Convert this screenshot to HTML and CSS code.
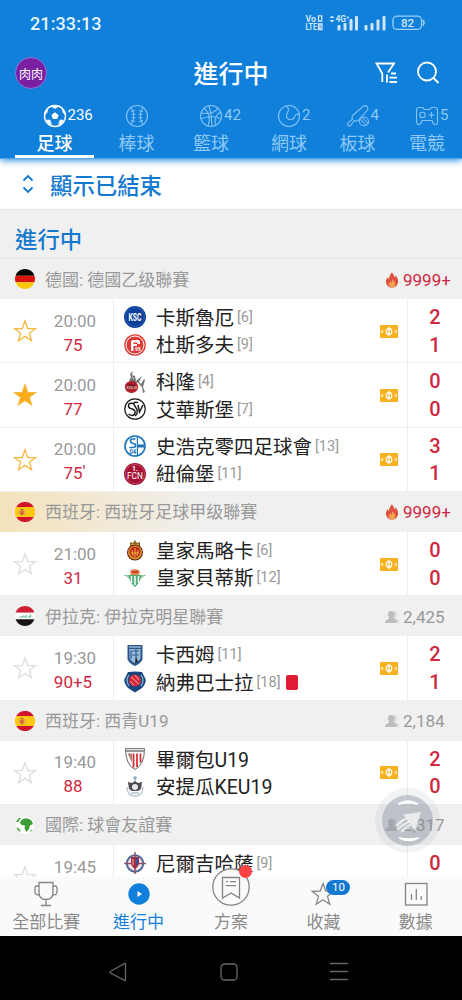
FILE: index.html
```html
<!DOCTYPE html>
<html lang="zh-Hant">
<head>
    <meta charset="UTF-8">
    <meta name="viewport" content="width=device-width, initial-scale=1.0">
    <title>進行中</title>
    <link rel="stylesheet" href="styles.css">
</head>
<body>
    <!-- Shared icons -->
    <svg class="sprite" width="0" height="0">
        <symbol id="star" viewBox="0 0 24 24"><path d="M12 1.800l2.700 7.700 7.700.2-6 4.600 2.100 7.400-6.500-4.300-6.500 4.300 2.100-7.400-6-4.600 7.700-.2z"/></symbol>
        <symbol id="pitch" viewBox="0 0 18 13">
            <rect width="18" height="13" rx="1" fill="#f9b01e"/>
            <ellipse cx="9" cy="6.500" rx="2.800" ry="2.800" fill="none" stroke="#fff" stroke-width="1.300"/>
            <path d="M9 1.800v9.400" stroke="#fff" stroke-width="1.300"/>
            <path d="M1.500 4.500l2 2-2 2zM16.500 4.500l-2 2 2 2z" fill="#fff"/>
        </symbol>
        <symbol id="fire" viewBox="0 0 14 16">
            <path d="M6.500.5C9 2 9.300 4 9.300 5.500c.8-.5 1-1.500 1-2.200C12.500 5.500 13.500 8 13 10.500c-.5 3-3 5-6 5s-5.500-2-6-5C.6 8 2 6 3 5c0 1 .3 1.800 1 2.300C3.800 4.500 5.500 3 6.500.5z" fill="#dd5140"/>
            <path d="M7 7c2 2 3.600 3.500 3.300 5.500-.3 1.800-1.700 3-3.300 3s-3.100-1.200-3.300-3C3.500 11 5 10.500 5.200 9c.6.500.9 1 1 1.500C7 9.500 7.300 8.500 7 7z" fill="#f5a04e"/>
        </symbol>
        <symbol id="people" viewBox="0 0 14 14">
            <path d="M8 1c3 0 4 2 3.500 4.500C11.200 7 10.500 8 10.500 9c2 .5 3.300 1 3.500 3H8z" fill="#d4d4d4"/>
            <path d="M6 1C3.800 1 2.800 2.500 3 4.800 3.200 6.500 4.200 7.500 4.200 8.700 2 9.500.3 10.200 0 13h12c-.3-2.800-2-3.500-4.200-4.300 0-1.200 1-2.200 1.200-3.900C9.200 2.500 8.200 1 6 1z" fill="#bdbdbd"/>
        </symbol>
        <symbol id="flag-es" viewBox="0 0 20 20">
            <path d="M1.300 5a10 10 0 0117.400 0z" fill="#cf142b"/>
            <path d="M1.300 5h17.400a10 10 0 010 10H1.300a10 10 0 010-10z" fill="#fdc80e"/>
            <path d="M1.300 15a10 10 0 0017.400 0z" fill="#cf142b"/>
            <path d="M3.500 8h1v5h-1zM9.500 8h1v5h-1z" fill="#d99a6b"/>
            <path d="M5.200 8.500h3.600v3a1.800 2 0 01-3.600 0z" fill="#cf6a3f"/>
            <path d="M5.500 7.500h3" stroke="#b5622f"/>
        </symbol>
    </svg>

    <div class="app">
        <header class="header">
            <div class="status-bar">
                <span class="clock">21:33:13</span>
                <div class="status-icons">
                    <svg width="122" height="18" viewBox="0 0 122 18" fill="#cfe6fa">
                        <g font-family="Roboto, sans-serif" font-weight="700">
                            <text x="0.500" y="7.500" font-size="8.500" textLength="10.500" lengthAdjust="spacingAndGlyphs">Vo</text>
                            <text x="0.500" y="16" font-size="8.500" textLength="11.500" lengthAdjust="spacingAndGlyphs">LTE</text>
                            <text x="30.500" y="8" font-size="9" textLength="14" lengthAdjust="spacingAndGlyphs">4G⁺</text>
                        </g>
                        <path d="M13.500 1.800h3.200v5.200h-3.200zM13.500 10h3.500v5.500h-3.500zM14 11.800h2M14 13.800h2" fill="none" stroke="#cfe6fa" stroke-width="1.300"/>
                        <path d="M24.500 4L27 1.500 29.500 4zM24.500 6L27 8.500 29.500 6z"/>
                        <rect x="32.500" y="11" width="3" height="5.500" rx="1"/>
                        <rect x="38.500" y="9" width="3" height="7.500" rx="1"/>
                        <rect x="44.500" y="5" width="3" height="11.500" rx="1"/>
                        <rect x="50" y="2" width="3" height="14.500" rx="1"/>
                        <rect x="59.500" y="11" width="3" height="5.500" rx="1"/>
                        <rect x="65.500" y="9" width="3" height="7.500" rx="1"/>
                        <rect x="71.500" y="5.500" width="3" height="11" rx="1"/>
                        <rect x="77.500" y="2" width="3" height="14.500" rx="1"/>
                        <rect x="88" y="2.200" width="28.500" height="13.200" rx="4" fill="none" stroke="#9fd0f7" stroke-width="1.300"/>
                        <path d="M118 6q2 2.800 0 5.600" fill="none" stroke="#9fd0f7" stroke-width="1.500"/>
                        <text x="96" y="13" font-size="11.500" font-weight="500" font-family="Roboto, sans-serif">82</text>
                    </svg>
                </div>
            </div>

            <div class="title-bar">
                <div class="avatar">肉肉</div>
                <h1>進行中</h1>
                <div class="title-actions">
                    <svg width="24" height="24" viewBox="0 0 24 24" fill="none" stroke="#fff" stroke-width="1.800">
                        <path d="M8.300 21V12.500L2.500 2.500h17.500L14 11.500M13 21.500v-8"/>
                        <path d="M17 12.500h5M15.500 16.700h7.500M15.500 21h7.500"/>
                    </svg>
                    <svg width="24" height="24" viewBox="0 0 24 24" fill="none" stroke="#fff" stroke-width="1.800">
                        <circle cx="11" cy="10.500" r="9"/>
                        <path d="M17.500 17l5 5"/>
                    </svg>
                </div>
            </div>

            <nav class="sports">
                <div class="sport active">
                    <div class="sport-icon">
                        <svg width="24" height="24" viewBox="0 0 24 24">
                            <circle cx="12" cy="12" r="10.500" fill="none" stroke="#fff" stroke-width="1.400"/>
                            <path d="M12 8.300l3.600 2.600-1.400 4.200H9.800l-1.400-4.200z" fill="#fff"/>
                            <path d="M8 2.300L12 4.500l4-2.200-4-1zM1.500 11l2.500-2.500L5 4.500l-3 3.500zM22.500 11L20 8.500l-1-4 3 3.500zM3.500 16h3.500l1.500 4.500-3-1zM20.500 16h-3.500l-1.500 4.500 3-1z" fill="#fff" stroke="#fff" stroke-width=".6"/>
                        </svg>
                        <span class="count">236</span>
                    </div>
                    <span class="sport-name">足球</span>
                </div>
                <div class="sport">
                    <div class="sport-icon">
                        <svg width="24" height="24" viewBox="0 0 24 24" class="line-icon">
                            <circle cx="12" cy="12" r="10.500"/>
                            <path d="M6 3.500c3.600 5 3.600 12 0 17M18 3.500c-3.600 5-3.600 12 0 17"/>
                            <path d="M6 7.500l4-1M6.500 10.500l4-.5M6.500 13.500l4 .5M6 16.500l4 1M18 7.500l-4-1M17.500 10.500l-4-.5M17.500 13.500l-4 .5M18 16.500l-4 1"/>
                        </svg>
                    </div>
                    <span class="sport-name">棒球</span>
                </div>
                <div class="sport">
                    <div class="sport-icon">
                        <svg width="24" height="24" viewBox="0 0 24 24" class="line-icon">
                            <circle cx="12" cy="12" r="10.500"/>
                            <path d="M10 1.500q3 10 3 21M2 9q13 2 17-5M2 15q10-5 20.500 0M5 4q8 7 4 18M21.500 8q-7 4-5 13"/>
                        </svg>
                        <span class="count">42</span>
                    </div>
                    <span class="sport-name">籃球</span>
                </div>
                <div class="sport">
                    <div class="sport-icon">
                        <svg width="24" height="24" viewBox="0 0 24 24" class="line-icon">
                            <circle cx="12" cy="12" r="10.500"/>
                            <path d="M9 2c5 3 1 6 .5 9.500C9 16 16 17 17.500 13c1-3 3-3.500 5-2"/>
                        </svg>
                        <span class="count">2</span>
                    </div>
                    <span class="sport-name">網球</span>
                </div>
                <div class="sport">
                    <div class="sport-icon">
                        <svg width="24" height="24" viewBox="0 0 24 24" class="line-icon">
                            <path d="M17.500 2q2-1 3.500.5t.5 3.500L12 16.500q-2 1-3.500 0l-4 5q-1.500 1-2.500 0t0-2.500l4.500-4q-1-2 0-3.500z"/>
                            <circle cx="18" cy="17.500" r="4.500"/>
                            <path d="M14.500 15l5.500 6.500M16.500 13.500l5.500 6"/>
                        </svg>
                        <span class="count">4</span>
                    </div>
                    <span class="sport-name">板球</span>
                </div>
                <div class="sport">
                    <div class="sport-icon">
                        <svg width="24" height="24" viewBox="0 0 24 24" class="line-icon">
                            <path d="M4 3.500h4l1 2h6l1-2h4q2.500 0 2.500 3v11.500q0 3-2.500 2.500-2 0-3-4H7q-1 4-3 4-2.500 0-2.500-2.500V6.500q0-3 2.500-3z"/>
                            <circle cx="7.500" cy="11" r="2.700"/>
                            <path d="M16.500 8v6M13.500 11h6"/>
                        </svg>
                        <span class="count">5</span>
                    </div>
                    <span class="sport-name">電競</span>
                </div>
            </nav>
        </header>

        <main class="content">
            <div class="show-ended">
                <svg width="12" height="20" viewBox="0 0 12 20" fill="none" stroke="#1379cf" stroke-width="1.900"><path d="M1.500 6.500L6 2l4.500 4.500M1.500 13.500L6 18l4.500-4.500"/></svg>
                <span>顯示已結束</span>
            </div>
            <h2 class="section-title">進行中</h2>

            <section>
                <div class="league">
                    <svg class="flag" viewBox="0 0 20 20">
                        <path d="M0.600 6.700a10 10 0 0118.800 0z" fill="#000"/>
                        <path d="M.6 6.700h18.800a10 10 0 010 6.600H.6a10 10 0 010-6.600z" fill="#d9140a"/>
                        <path d="M.6 13.300a10 10 0 0018.800 0z" fill="#fcc908"/>
                    </svg>
                    <span class="league-name">德國: 德國乙级聯賽</span>
                    <span class="viewers hot"><svg width="14" height="16"><use href="#fire"/></svg>9999+</span>
                </div>

                <div class="match">
                    <svg class="star fav"><use href="#star"/></svg>
                    <div class="time"><span>20:00</span><span class="minute">75</span></div>
                    <div class="teams">
                        <div class="team">
                            <svg class="logo" viewBox="0 0 22 22">
                                <circle cx="11" cy="11" r="11" fill="#0a3f9c"/><circle cx="11" cy="11" r="9.500" fill="none" stroke="#3e70bd" stroke-width=".6"/>
                                <text x="4.500" y="15" font-size="11" textLength="13" lengthAdjust="spacingAndGlyphs" class="logo-text" fill="#fff">KSC</text>
                            </svg>
                            <span class="name">卡斯魯厄</span><small>[6]</small>
                        </div>
                        <div class="team">
                            <svg class="logo" viewBox="0 0 22 22">
                                <circle cx="11" cy="11" r="10.800" fill="#df3a35"/><circle cx="11" cy="11" r="9" fill="none" stroke="#fff" stroke-width="1"/>
                                <path d="M7 17V8q0-2 2-2h5q2 0 2 2v2h-2.500V8.500H9.500V17zM9 10h4v2H9z" fill="#fff"/>
                                <text x="11" y="16.500" font-size="5" class="logo-text" fill="#fff">95</text>
                            </svg>
                            <span class="name">杜斯多夫</span><small>[9]</small>
                        </div>
                    </div>
                    <svg class="pitch"><use href="#pitch"/></svg>
                    <div class="score"><span>2</span><span>1</span></div>
                </div>

                <div class="match">
                    <svg class="star fav on"><use href="#star"/></svg>
                    <div class="time"><span>20:00</span><span class="minute">77</span></div>
                    <div class="teams">
                        <div class="team">
                            <svg class="logo" viewBox="0 0 22 22">
                                <path d="M5 10L7 6 6 3l3-3-1 4 3 1 1 5 6-5-3 6 2 2 3-5 1 1-2 7 2 5-2 1-1-6-4-4-6 0z" fill="#777"/>
                                <path d="M8 6l2 2M13 11l4 5" stroke="#ddd"/>
                                <ellipse cx="7.500" cy="16" rx="6.700" ry="6" fill="#b51e2b"/><path d="M2 15q5-3 10-1l-1 4q-4-1-8 1z" fill="#6c1c22"/>
                                <text x="2.500" y="18" font-size="4" class="logo-text" fill="#f4b8b4">KOLN</text>
                            </svg>
                            <span class="name">科隆</span><small>[4]</small>
                        </div>
                        <div class="team">
                            <svg class="logo" viewBox="0 0 22 22" fill="none" stroke="#1c1c1c">
                                <circle cx="11" cy="11" r="10.200" fill="#fff" stroke-width="1.200"/>
                                <path d="M9.500 5.500q-5-1-5 2t4 3.500q4 2 2 5t-6 0M14 4.500q-5-1-4 2l3 5q1 4-2 6.500M14 7l1.500 7 3.500-7" stroke-width="1.500"/>
                            </svg>
                            <span class="name">艾華斯堡</span><small>[7]</small>
                        </div>
                    </div>
                    <svg class="pitch"><use href="#pitch"/></svg>
                    <div class="score"><span>0</span><span>0</span></div>
                </div>

                <div class="match">
                    <svg class="star fav"><use href="#star"/></svg>
                    <div class="time"><span>20:00</span><span class="minute">75<i>'</i></span></div>
                    <div class="teams">
                        <div class="team">
                            <svg class="logo" viewBox="0 0 22 22">
                                <circle cx="11" cy="11" r="10" fill="#fff" stroke="#1a73b8" stroke-width="1.600"/>
                                <path d="M14 2v7.500h6v3h-6V20h-1.200V2z" fill="#1a73b8"/>
                                <path d="M11.500 4H8.500Q6.500 4 6.500 6t2 2.500h1q2 0 2 2t-2 2h-4" fill="none" stroke="#1a73b8" stroke-width="1.600"/>
                                <text x="5.500" y="19" font-size="6.500" textLength="6.500" lengthAdjust="spacingAndGlyphs" class="logo-text" fill="#1a73b8">04</text>
                            </svg>
                            <span class="name">史浩克零四足球會</span><small>[13]</small>
                        </div>
                        <div class="team">
                            <svg class="logo" viewBox="0 0 22 22">
                                <circle cx="11" cy="11" r="11" fill="#a50f34"/><circle cx="11" cy="11" r="9.600" fill="none" stroke="#c96a80" stroke-width=".6"/>
                                <text x="11" y="8" font-size="7" text-anchor="middle" class="logo-text" fill="#fff">1.</text>
                                <text x="3" y="15.500" font-size="8.500" textLength="16" lengthAdjust="spacingAndGlyphs" class="logo-text light" fill="#fff">FCN</text>
                            </svg>
                            <span class="name">紐倫堡</span><small>[11]</small>
                        </div>
                    </div>
                    <svg class="pitch"><use href="#pitch"/></svg>
                    <div class="score"><span>3</span><span>1</span></div>
                </div>
            </section>

            <section>
                <div class="league featured">
                    <svg class="flag"><use href="#flag-es"/></svg>
                    <span class="league-name">西班牙: 西班牙足球甲级聯賽</span>
                    <span class="viewers hot"><svg width="14" height="16"><use href="#fire"/></svg>9999+</span>
                </div>
                <div class="match">
                    <svg class="star"><use href="#star"/></svg>
                    <div class="time"><span>21:00</span><span class="minute">31</span></div>
                    <div class="teams">
                        <div class="team">
                            <svg class="logo" viewBox="0 0 22 22">
                                <path d="M6 3l3 1 2-3 2 3 3-1v4H6z" fill="#8a6a22"/><path d="M7 5.500h8" stroke="#d5a83a"/>
                                <circle cx="11" cy="13.500" r="8" fill="#5e1a14"/><circle cx="11" cy="13.500" r="7" fill="#d99a2b"/><circle cx="11" cy="13" r="5.500" fill="#c3271e"/>
                                <path d="M11 9v9M8 11l1 6M14 11l-1 6M7 14h8" stroke="#eab63c" fill="none"/>
                            </svg>
                            <span class="name">皇家馬略卡</span><small>[6]</small>
                        </div>
                        <div class="team">
                            <svg class="logo" viewBox="0 0 22 22">
                                <path d="M6 4q5-4 10 0l-1 4H7z" fill="#dd8753"/><path d="M8 5h6" stroke="#c62828" stroke-width="1.500"/>
                                <path d="M0 8h22l-5 3-2 5-4 4-4-4-2-5z" fill="#4fab74"/>
                                <path d="M7.500 9v7M11 9v9M14.500 9v7" stroke="#fff" stroke-width="1.500"/><path d="M2 9h3M17 9h3" stroke="#d8e7bb"/>
                            </svg>
                            <span class="name">皇家貝蒂斯</span><small>[12]</small>
                        </div>
                    </div>
                    <svg class="pitch"><use href="#pitch"/></svg>
                    <div class="score"><span>0</span><span>0</span></div>
                </div>
            </section>

            <section>
                <div class="league">
                    <svg class="flag" viewBox="0 0 20 20">
                        <path d="M.6 6.700a10 10 0 0118.800 0z" fill="#ce1f36"/>
                        <path d="M.6 6.700h18.800a10 10 0 010 6.600H.6a10 10 0 010-6.600z" fill="#fff"/>
                        <path d="M.6 13.300a10 10 0 0018.800 0z" fill="#151515"/>
                        <path d="M4.500 11h3.500V9.500M9 11h2V9M12.500 11h3V8.500" stroke="#57b889" fill="none" stroke-width="1.200"/>
                    </svg>
                    <span class="league-name">伊拉克: 伊拉克明星聯賽</span>
                    <span class="viewers"><svg width="14" height="14"><use href="#people"/></svg>2,425</span>
                </div>
                <div class="match">
                    <svg class="star"><use href="#star"/></svg>
                    <div class="time"><span>19:30</span><span class="minute">90+5</span></div>
                    <div class="teams">
                        <div class="team">
                            <svg class="logo" viewBox="0 0 22 22">
                                <path d="M3.500 1h15v14q-1 4-7.500 7-6.500-3-7.500-7z" fill="#28588e"/>
                                <path d="M5.500 5h11v9q-1 3-5.500 5-4.500-2-5.500-5z" fill="#9dbbd6"/>
                                <path d="M7 7h8M7 7v8M12 5v12M8 11h7" stroke="#2f5f98" stroke-width="1.200"/><path d="M5 3h12" stroke="#d6e3ee"/><path d="M12 13l2 5-3 1z" fill="#222"/>
                            </svg>
                            <span class="name">卡西姆</span><small>[11]</small>
                        </div>
                        <div class="team">
                            <svg class="logo" viewBox="0 0 22 22">
                                <path d="M4 1q7-1 14 0l3.500 7q1 4-3.500 9l-7 4.500L4 17Q-.5 12 .5 8z" fill="#19457f"/>
                                <path d="M5 4q-4 5 0 11M17 4q4 5 0 11" fill="none" stroke="#6fa9cc" stroke-width="1.500"/>
                                <circle cx="11" cy="9.500" r="6" fill="#d4293b"/><path d="M7 6l8 7M11 4l4 5M6 10l4 4" stroke="#f3a5a8"/>
                            </svg>
                            <span class="name">納弗巴士拉</span><small>[18]</small><span class="red-card"></span>
                        </div>
                    </div>
                    <svg class="pitch"><use href="#pitch"/></svg>
                    <div class="score"><span>2</span><span>1</span></div>
                </div>
            </section>

            <section>
                <div class="league">
                    <svg class="flag"><use href="#flag-es"/></svg>
                    <span class="league-name">西班牙: 西青U19</span>
                    <span class="viewers"><svg width="14" height="14"><use href="#people"/></svg>2,184</span>
                </div>
                <div class="match">
                    <svg class="star"><use href="#star"/></svg>
                    <div class="time"><span>19:40</span><span class="minute">88</span></div>
                    <div class="teams">
                        <div class="team">
                            <svg class="logo" viewBox="0 0 22 22">
                                <path d="M1.500.7h19q0 16-9.500 20.800Q1.500 16.700 1.500.7z" fill="#fff" stroke="#666"/>
                                <path d="M2 3h18" stroke="#777" stroke-width="1.500"/>
                                <path d="M9.500 5.500v14M13 5.500v13.500M16.500 5.500v9" stroke="#d63137" stroke-width="1.800"/><path d="M3.500 5.500h4.500v9z" fill="#ad8278"/>
                            </svg>
                            <span class="name">畢爾包U19</span>
                        </div>
                        <div class="team">
                            <svg class="logo" viewBox="0 0 22 22">
                                <path d="M3 11q0 9 8 9t8-9" fill="none" stroke="#c3c8cb" stroke-width="1.500"/>
                                <path d="M11 0v5M9 2h4" stroke="#5c92b5"/><path d="M4 6l4 1 3-2 3 2 4-1-1 7-3 2h-6l-3-2z" fill="#4b4b50"/>
                                <circle cx="11" cy="11" r="3" fill="#e5e7e8"/><path d="M7 17h8" stroke="#89a7b7"/>
                            </svg>
                            <span class="name">安提瓜KEU19</span>
                        </div>
                    </div>
                    <svg class="pitch"><use href="#pitch"/></svg>
                    <div class="score"><span>2</span><span>0</span></div>
                </div>
            </section>

            <section>
                <div class="league">
                    <svg class="flag" viewBox="0 0 20 20">
                        <circle cx="10" cy="10" r="9.700" fill="#fff" stroke="#dbe8d5" stroke-width=".6"/>
                        <path d="M6 5.500l3-2 4 0 3.500 2 1.500 3.500-3 1.500-1 3.500-2.500 3-2-3.500.5-3-3.500-.5-1.500-2zM1 7l3-4 2 0-3 4zM1.500 12l3 2 1 3q-3-1-4-5zM14.500 16l3-1.500-1.500 2z" fill="#3d9e35"/>
                    </svg>
                    <span class="league-name">國際: 球會友誼賽</span>
                    <span class="viewers"><svg width="14" height="14"><use href="#people"/></svg>2,317</span>
                </div>
                <div class="match">
                    <svg class="star"><use href="#star"/></svg>
                    <div class="time"><span>19:45</span><span class="minute">&nbsp;</span></div>
                    <div class="teams">
                        <div class="team">
                            <svg class="logo" viewBox="0 0 22 22">
                                <circle cx="11" cy="11.500" r="8.200" fill="#f2e4e7" stroke="#526a98" stroke-width="2"/>
                                <path d="M11 0v22M0 11.500h22" stroke="#8d5268" stroke-width="1.500"/>
                                <path d="M7 5h8v7q-1 3-4 5-3-2-4-5z" fill="#a32c47"/><path d="M12 6h2v6l-2 2z" fill="#345591"/><path d="M9 7v6" stroke="#e9b7c0"/>
                            </svg>
                            <span class="name">尼爾吉哈薩</span><small>[9]</small>
                        </div>
                        <div class="team"></div>
                    </div>
                    <div class="pitch"></div>
                    <div class="score"><span>0</span><span>&nbsp;</span></div>
                </div>
            </section>
        </main>

        <div class="float-button">
            <svg width="50" height="50" viewBox="0 0 50 50">
                <path d="M15.500 8q9.500-6 19 0-9.500-2-19 0zM16.500 42q9.500 5 19 0-9.500 2-19 0z" fill="#fff" stroke="#fff" stroke-width="1.500" stroke-linejoin="round"/>
                <path d="M20 18.500l18-2.500-6 19-4-6z" fill="#f3f4f5" opacity=".8"/>
                <path d="M14 29q4-4 11-7M15 33q4-4 12-8M19 35q4-3 9-7" fill="none" stroke="#f3f4f5" stroke-width="2.500" stroke-linecap="round" opacity=".8"/>
            </svg>
        </div>

        <nav class="bottom-nav">
            <div class="nav-item">
                <svg width="26" height="26" viewBox="0 0 26 26" class="nav-icon">
                    <path d="M6 1.500h14v10q0 7-7 7t-7-7zM6 5H3.500Q2 5 2 7v4q0 3 4.500 3M20 5h2.500Q24 5 24 7v4q0 3-4.500 3M13 18.500v6M8 24.500h10"/>
                </svg>
                <span>全部比賽</span>
            </div>
            <div class="nav-item active">
                <svg width="26" height="26" viewBox="0 0 26 26">
                    <circle cx="13" cy="13" r="10.700" fill="#1180dc"/><path d="M11.500 10l4.500 3-4.500 3z" fill="#fff"/>
                </svg>
                <span>進行中</span>
            </div>
            <div class="nav-item">
                <div class="plan-icon">
                    <svg width="38" height="38" viewBox="0 0 38 38" class="nav-icon">
                        <circle cx="19" cy="19" r="18.200" fill="#fafafa"/>
                        <path d="M10.500 9.500h17v20.500l-8.500-5-8.500 5zM14 13.700h2M18 13.700h6M14 17.700h10"/>
                    </svg>
                    <span class="dot"></span>
                </div>
                <span>方案</span>
            </div>
            <div class="nav-item">
                <div class="fav-icon">
                    <svg width="26" height="26" viewBox="0 0 26 26" class="nav-icon">
                        <path d="M13 2.500l2.800 7.500 8 .3-6.300 5 2.200 8-6.700-4.600-6.700 4.600 2.200-8-6.300-5 8-.3z"/>
                    </svg>
                    <span class="badge">10</span>
                </div>
                <span>收藏</span>
            </div>
            <div class="nav-item">
                <svg width="26" height="26" viewBox="0 0 26 26" class="nav-icon">
                    <rect x="2.500" y="2.500" width="21.500" height="21.500"/><path d="M8.500 13v6M13.300 8v11M18.200 15v4"/>
                </svg>
                <span>數據</span>
            </div>
        </nav>

        <footer class="system-nav">
            <svg width="20" height="20" viewBox="0 0 20 20"><path d="M17.500 2v16q0 1-1 .4L2.500 11q-1-.8 0-1.500l14-8q1-.5 1 .5z"/></svg>
            <svg width="20" height="20" viewBox="0 0 20 20"><rect x="2" y="2" width="16" height="16" rx="3.500"/></svg>
            <svg width="20" height="20" viewBox="0 0 20 20"><path d="M1 1.500h18M1 9.500h18M1 17.500h18"/></svg>
        </footer>
    </div>
</body>
</html>
```
FILE: styles.css
```css
* {
    box-sizing: border-box;
}

body {
    margin: 0;
    font-family: Roboto, "Noto Sans CJK TC", sans-serif;
    background-color: #fff;
    color: #222;
}

svg {
    display: block;
    flex-shrink: 0;
}

.sprite {
    position: absolute;
}

.app {
    position: relative;
    display: flex;
    flex-direction: column;
    height: 1000px;
    overflow: hidden;
}

/* Header */
.header {
    height: 159px;
    flex-shrink: 0;
    background-color: #1080db;
    color: #fff;
    box-shadow: 0 1px 7px #1080db;
    z-index: 1;
}

.status-bar {
    display: flex;
    justify-content: space-between;
    align-items: center;
    height: 46px;
    padding: 0 35px 0 30px;
}

.clock {
    font-size: 18px;
    font-weight: 500;
    letter-spacing: 0.1px;
    color: #e3f5ff;
}

.title-bar {
    display: grid;
    grid-template-columns: 1fr auto 1fr;
    align-items: center;
    height: 54px;
    padding: 0 22px 0 15px;
}

.avatar {
    display: flex;
    align-items: center;
    justify-content: center;
    width: 32px;
    height: 32px;
    border: 1.5px solid #8d75dd;
    border-radius: 50%;
    background-color: #7b1fa2;
    font-size: 12px;
}

h1 {
    margin: 0 -7px 0 0;
    padding-top: 4px;
    font-size: 25px;
    font-weight: 500;
    line-height: 36px;
}

.title-actions {
    display: flex;
    justify-content: flex-end;
    gap: 18px;
}

.sports {
    display: grid;
    grid-template-columns: 79px 85px 64px 92px 45px 94px;
    height: 59px;
    padding-left: 15px;
    overflow: hidden;
    border-bottom: 1px solid #55a6e8;
}

.sport {
    display: flex;
    flex-direction: column;
    align-items: center;
    height: 58px;
    padding-top: 4px;
    color: #8ec9f5;
}

.sport.active {
    color: #fff;
    border-bottom: 3px solid #fff;
}

.sport-icon {
    position: relative;
    height: 24px;
}

.count {
    position: absolute;
    left: 25px;
    top: 1px;
    font-size: 15px;
    line-height: 20px;
}

.line-icon {
    fill: none;
    stroke: #83c2f3;
    stroke-width: 1.1;
}

.sport-name {
    padding-top: 2px;
    font-size: 18px;
    line-height: 27px;
}

.active .sport-name {
    font-weight: 500;
}

/* Match list */
.content {
    flex: 1;
    min-height: 0;
    overflow: hidden;
}

.show-ended {
    display: flex;
    align-items: center;
    gap: 16px;
    height: 51px;
    border-bottom: 1px solid #e3e3e3;
    padding-left: 22px;
    font-size: 22.4px;
    font-weight: 500;
    color: #1379cf;
}

.section-title {
    height: 49px;
    margin: 0;
    padding: 12px 0 0 15px;
    border-bottom: 1px solid #e6e6e6;
    background-color: #f0f0f0;
    font-size: 22.4px;
    font-weight: 500;
    line-height: 36px;
    color: #1379cf;
}

.league {
    display: flex;
    align-items: center;
    height: 40px;
    padding: 0 12px 0 15px;
    background-color: #f0f0f0;
    font-size: 17px;
    color: #999;
}

.league.featured {
    background: linear-gradient(90deg, #f4e2bb, #f0f0f0 45%);
}

.flag {
    width: 20px;
    height: 20px;
    margin-right: 10px;
}

.league-name {
    padding-bottom: 2px;
}

.viewers {
    display: flex;
    align-items: center;
    gap: 4px;
    width: 65px;
    padding-top: 1px;
    margin-left: auto;
}

.viewers.hot {
    color: #cf2840;
}

.match {
    display: grid;
    grid-template-columns: 49px 64px 258px 36px 55px;
    height: 64.33px;
    border-bottom: 1px solid #f0f0f0;
    align-items: center;
}

.star {
    width: 24px;
    height: 24px;
    margin: 1px 0 0 13px;
    fill: none;
    stroke: #ddd;
    stroke-width: 1.3;
}

.star.fav {
    stroke: #f6b83e;
}

.star.on {
    fill: #fbab17;
}

.time {
    display: flex;
    flex-direction: column;
    align-items: center;
    padding: 4px 13px 0 0;
    font-size: 17px;
    line-height: 24px;
    color: #999;
}

.time span:first-child {
    margin-right: -1px;
}

.minute {
    position: relative;
    margin-right: 3px;
    color: #cf2840;
}

.minute i {
    position: absolute;
    left: 100%;
    top: -2px;
    font-style: normal;
}

.teams {
    display: flex;
    flex-direction: column;
    justify-content: center;
    height: 100%;
    padding: 1px 0 0 10px;
    border-left: 1px solid #eee;
}

.team {
    display: flex;
    align-items: center;
    height: 27.5px;
    font-size: 19.5px;
    line-height: 27px;
    white-space: nowrap;
}

.name {
    padding-top: 2px;
}

.logo {
    width: 22px;
    height: 22px;
    margin-right: 10px;
}

.logo-text {
    font-family: Roboto, sans-serif;
    font-weight: 700;
}

.logo-text.light {
    font-weight: 400;
}

.team small {
    margin-left: 3px;
    font-size: 14.5px;
    color: #999;
}

.red-card {
    width: 12px;
    height: 15px;
    margin-left: 5px;
    border-radius: 2px;
    background-color: #e01b35;
}

.pitch {
    width: 18px;
    height: 13px;
    margin: 1px 0 0 9px;
}

.score {
    display: flex;
    flex-direction: column;
    align-items: center;
    justify-content: center;
    height: 100%;
    padding-top: 2px;
    border-left: 1px solid #eee;
    font-size: 20px;
    font-weight: 500;
    line-height: 27.5px;
    color: #cf2840;
}

/* Floating button over the list */
.float-button {
    position: absolute;
    left: 375px;
    top: 788px;
    display: flex;
    align-items: center;
    justify-content: center;
    width: 65px;
    height: 65px;
    border: 7.5px solid rgba(150, 155, 170, 0.12);
    border-radius: 50%;
    background-color: rgba(140, 145, 158, 0.5);
    background-clip: padding-box;
}

/* Bottom navigation */
.bottom-nav {
    display: grid;
    grid-template-columns: repeat(5, 1fr);
    height: 59px;
    flex-shrink: 0;
    background-color: #fafafa;
    z-index: 1;
}

.nav-item {
    display: flex;
    flex-direction: column;
    align-items: center;
    padding-top: 4px;
    font-size: 17px;
    line-height: 31px;
    color: #8a8a8a;
}

.nav-item.active {
    color: #1180dc;
}

.nav-icon {
    fill: none;
    stroke: #858585;
    stroke-width: 1.3;
}

.plan-icon {
    position: relative;
    height: 38px;
    margin: -13px 0 1px;
}

.dot {
    position: absolute;
    right: -2px;
    top: -3px;
    width: 13px;
    height: 13px;
    border-radius: 50%;
    background-color: #fd4343;
}

.fav-icon {
    position: relative;
}

.badge {
    position: absolute;
    left: 16px;
    top: -1px;
    width: 24px;
    height: 15px;
    border-radius: 8px;
    background-color: #1378cf;
    font-size: 11.5px;
    line-height: 15px;
    text-align: center;
    color: #fff;
}

/* Android buttons */
.system-nav {
    display: flex;
    align-items: center;
    justify-content: center;
    gap: 90.5px;
    height: 64px;
    flex-shrink: 0;
    padding: 8px 5px 0 0;
    background-color: #000;
}

.system-nav svg {
    fill: none;
    stroke: #686868;
    stroke-width: 1.3;
}
```
